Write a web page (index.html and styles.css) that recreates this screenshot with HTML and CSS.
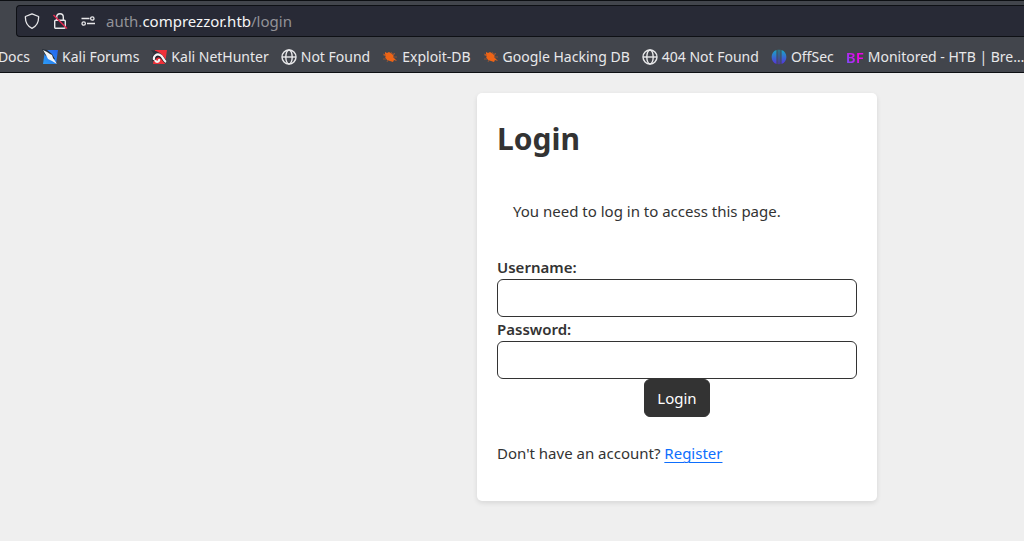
FILE: index.html
```html
<!DOCTYPE html>
<html lang="en">
<head>
<meta charset="utf-8">
<title>Login</title>
<link rel="stylesheet" href="styles.css">
</head>
<body>
<header class="chrome">
  <div class="address">
    <svg class="tool" viewBox="0 0 16 16" fill="none" stroke="currentColor" stroke-width="1.3" stroke-linejoin="round"><path d="M8 .8 14.6 3.500C14.800 8.500 12.500 13.300 8 15.300 3.500 13.300 1.200 8.500 1.400 3.500Z"/></svg>
    <svg class="tool" viewBox="0 0 16 16" fill="none" stroke="currentColor" stroke-width="1.4"><rect x="2.700" y="7.200" width="10.600" height="8" rx="1"/><path d="M4.700 7V4a3.300 3.300 0 0 1 6.600 0v3"/><path d="M1.500 2 15 15.500" stroke="#e22850" stroke-width="1.500"/></svg>
    <svg class="tool" viewBox="0 0 16 16" fill="none" stroke="currentColor" stroke-width="1.300"><path d="M1.500 5.500h8M7 10.500h8"/><circle cx="12.300" cy="5.500" r="1.700"/><circle cx="3.700" cy="10.500" r="1.700"/></svg>
    <div class="url">auth.<span class="domain">comprezzor.htb</span>/login</div>
  </div>
  <nav class="bookmarks">
    <a class="bookmark cut" href="#">Docs</a>
    <a class="bookmark" href="#"><svg class="icon" viewBox="0 0 16 16"><defs><linearGradient id="kf" x1="0" y1="1" x2="1" y2="0"><stop stop-color="#2c9cf5"/><stop offset="1" stop-color="#2364ef"/></linearGradient></defs><path d="M3 1h13l-2 14H1Z" fill="url(#kf)"/><path d="M0 0 5 1 10 5l3 5-3 1-7-5Z" fill="#252c35"/><path d="m1 1 4 2 3 2 2 1 1 3 4 6-5-3-4-2-2-4Z" fill="#f2f4f5"/></svg>Kali Forums</a>
    <a class="bookmark" href="#"><svg class="icon" viewBox="0 0 16 16"><path d="M4 1h12l-2 14H2Z" fill="#ef3038"/><path d="m0 1 5 1 4 2 2 2-8 5-2-4 2-2Z" fill="#30313a"/><path d="M3 12C2 7 6 5 9 7c3 1 3 4 6 6" fill="none" stroke="#29202a" stroke-width="3.500"/><path d="M3 11C2 7 6 4 9 6c3 1 3 5 6 7M4 11c1 3 5 2 4-1" fill="none" stroke="#f5f5f5" stroke-width="2.200"/></svg>Kali NetHunter</a>
    <a class="bookmark" href="#"><svg class="icon" viewBox="0 0 16 16" fill="none" stroke="currentColor" stroke-width="1.400"><circle cx="8" cy="8" r="7"/><ellipse cx="8" cy="8" rx="3.200" ry="7"/><path d="M1 8h14"/></svg>Not Found</a>
    <a class="bookmark" href="#"><svg class="icon" viewBox="0 0 16 16"><path d="M3 3l2 1 2-1 3 2 2 2-1 1 4 4-3-1-1 2-3-1-3-1-2-3 1-1-3-1 2-1Z" fill="#ee6416"/><path d="M1 5l3 1m5-3 1 2 3 0m-2 3 4 0M4 10l-3 0m5 1-1 2m6-7 2-2" fill="none" stroke="#a55832" stroke-width=".8"/></svg>Exploit-DB</a>
    <a class="bookmark" href="#"><svg class="icon" viewBox="0 0 16 16"><path d="M3 3l2 1 2-1 3 2 2 2-1 1 4 4-3-1-1 2-3-1-3-1-2-3 1-1-3-1 2-1Z" fill="#ee6416"/><path d="M1 5l3 1m5-3 1 2 3 0m-2 3 4 0M4 10l-3 0m5 1-1 2m6-7 2-2" fill="none" stroke="#a55832" stroke-width=".8"/></svg>Google Hacking DB</a>
    <a class="bookmark" href="#"><svg class="icon" viewBox="0 0 16 16" fill="none" stroke="currentColor" stroke-width="1.400"><circle cx="8" cy="8" r="7"/><ellipse cx="8" cy="8" rx="3.200" ry="7"/><path d="M1 8h14"/></svg>404 Not Found</a>
    <a class="bookmark" href="#"><svg class="icon" viewBox="0 0 16 16"><defs><linearGradient id="os" x2="0" y2="1"><stop stop-color="#17a9c4"/><stop offset="1" stop-color="#5632dc"/></linearGradient></defs><path d="M5.500 1v14C-1 13-1 3 5.500 1ZM6.700.8h.8v14.400l-.8-.2ZM8.500.8h.8V15l-.8.2ZM10.500 1v14C17 13 17 3 10.500 1Z" fill="url(#os)"/></svg>OffSec</a>
    <a class="bookmark" href="#"><span class="bf">BF</span>Monitored - HTB | Bre…</a>
  </nav>
</header>
<main class="page">
  <section class="card">
    <h1 class="title">Login</h1>
    <p class="notice">You need to log in to access this page.</p>
    <form class="form">
      <label class="caption" for="username">Username:</label>
      <input class="field" id="username" type="text">
      <label class="caption" for="password">Password:</label>
      <input class="field" id="password" type="password">
      <button class="submit" type="button">Login</button>
    </form>
    <p class="signup">Don't have an account? <a class="register" href="#">Register</a></p>
  </section>
</main>
</body>
</html>
```
FILE: styles.css
```css
* { box-sizing: border-box; }
body {
  margin: 0;
  min-height: 100vh;
  background: #efefef;
  color: #333;
  font: 15px/24px "Noto Sans", sans-serif;
  overflow-x: hidden;
}
.chrome {
  background: #42454c;
  border-top: 1px solid #0d0f13;
  border-bottom: 1px solid #0d0f13;
  color: #e8e8ea;
  padding-top: 4px;
}
.address {
  display: flex;
  align-items: center;
  gap: 12px;
  height: 32px;
  margin-left: 16px;
  padding-left: 7px;
  background: #282a36;
  border: 1px solid #0e1015;
  border-right: 0;
  border-radius: 4px 0 0 4px;
}
.tool, .icon { width: 16px; height: 16px; flex: none; }
.url { margin-left: -2px; color: #929298; white-space: nowrap; }
.domain { color: #f6f6f7; }
.bookmarks {
  display: flex;
  align-items: center;
  gap: 12px;
  height: 35px;
  padding-top: 4px;
  overflow: hidden;
}
.bookmark {
  display: flex;
  align-items: center;
  gap: 4px;
  flex: none;
  color: inherit;
  font-size: 14px;
  text-decoration: none;
  white-space: nowrap;
}
.cut { width: 30px; justify-content: flex-end; }
.bf {
  background: linear-gradient(to top right, #5268ff, #f000e8 60%);
  -webkit-background-clip: text;
  background-clip: text;
  color: transparent;
  font-size: 15px;
  font-weight: 600;
}
.page {
  display: grid;
  grid-template-columns: 477fr minmax(0, 400px) 147fr;
  padding: 20px 0;
}
.card {
  grid-column: 2;
  padding: 20px;
  background: #fff;
  border-radius: 5px;
  box-shadow: 0 2px 5px rgba(0, 0, 0, .1);
}
.title { margin: 6px 0 24px; font-size: 30px; line-height: 40px; font-weight: 700; }
.notice { margin: 0 0 16px; padding: 16px; }
.form { display: flex; flex-direction: column; }
.caption { font-weight: 600; }
.field {
  width: 100%;
  height: 38px;
  padding: 6px 12px;
  border: 1px solid #333;
  border-radius: 6px;
  background: #fff;
  font: inherit;
}
.submit {
  align-self: center;
  padding: 6px 12px;
  border: 1px solid #333;
  border-radius: 6px;
  background: #333;
  color: #fff;
  font: inherit;
}
.signup { margin: 24px 0 16px; }
.register { color: #0d6efd; text-underline-offset: 3px; }
```
